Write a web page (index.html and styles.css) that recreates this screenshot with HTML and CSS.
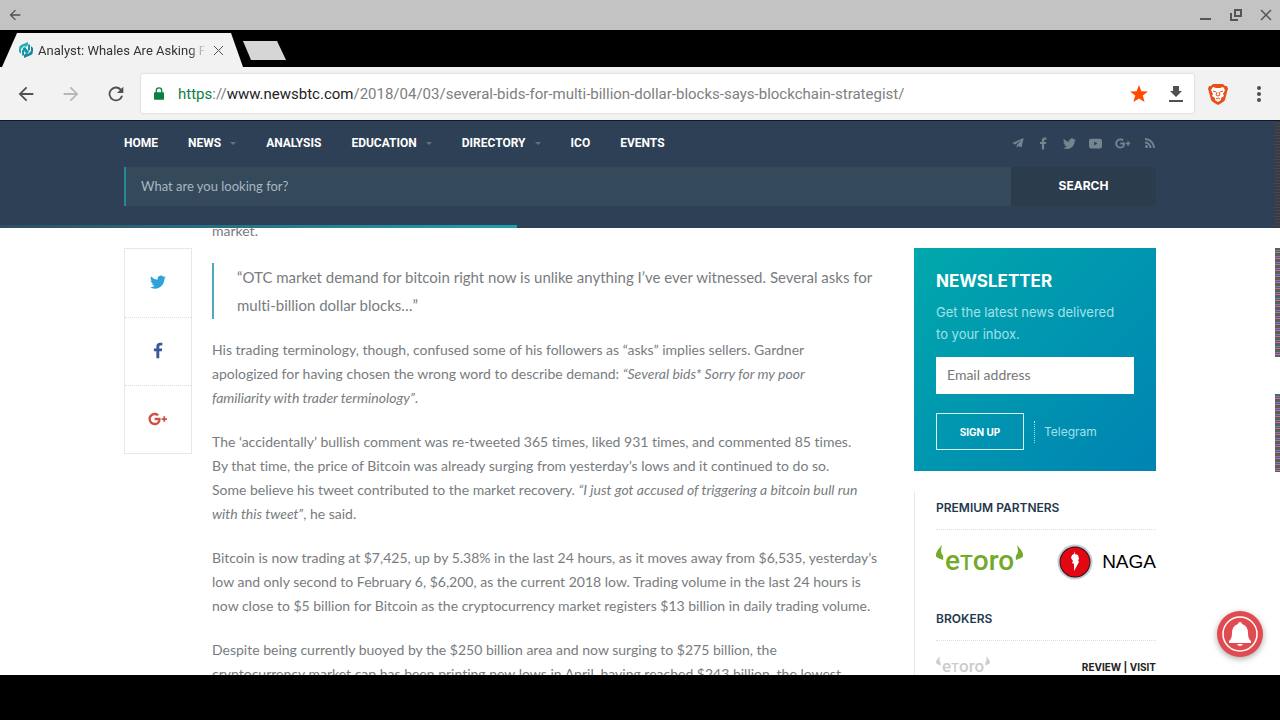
FILE: index.html
```html
<!DOCTYPE html>
<html lang="en">
<head>
    <meta charset="utf-8">
    <title>Analyst: Whales Are Asking For Bitcoin</title>
    <link rel="stylesheet" href="styles.css">
</head>
<body>
    <svg class="defs" aria-hidden="true">
        <symbol id="back" viewBox="0 0 24 24"><path d="M20 11H7.8l5.6-5.6L12 4l-8 8 8 8 1.4-1.4L7.8 13H20z"/></symbol>
        <symbol id="twitter" viewBox="0 0 24 24"><path d="M23.6 4.9a9.6 9.6 0 0 1-2.7.8 4.800 4.800 0 0 0 2.100-2.700 9.600 9.600 0 0 1-3.100 1.200 4.800 4.800 0 0 0-8.300 4.400A13.700 13.700 0 0 1 1.700 3.600a4.800 4.800 0 0 0 1.500 6.500 4.800 4.800 0 0 1-2.200-.6c0 2.300 1.600 4.400 3.900 4.800a4.800 4.800 0 0 1-2.200.1 4.800 4.800 0 0 0 4.500 3.400A9.700 9.700 0 0 1 0 19.800a13.700 13.700 0 0 0 7.500 2.200c9.100 0 14.300-7.700 14-14.600a10 10 0 0 0 2.100-2.500z"/></symbol>
        <symbol id="facebook" viewBox="0 0 24 24"><path d="M9 23V13H5.500V9H9V6.200C9 2.800 11 1 14.200 1c1.500 0 2.800.1 3.200.2V5h-2.200c-1.700 0-2.100.8-2.100 2v2h4.200l-.6 4h-3.600v10z"/></symbol>
        <symbol id="gplus" viewBox="0 0 28 24"><path d="M9 10.300v3.400h5.400c-.3 1.500-1.700 4.100-5.400 4.100-3.200 0-5.800-2.600-5.800-5.800S5.800 6.200 9 6.200c1.800 0 3.100.8 3.800 1.500l2.600-2.500C13.800 3.700 11.600 2.700 9 2.700a9.300 9.300 0 0 0 0 18.600c5.400 0 8.900-3.800 8.900-9.100 0-.7-.1-1.200-.2-1.900zM22 8v2.700h-2.700v2.700H22V16h2.700v-2.600h2.700v-2.700h-2.700V8z"/></symbol>
        <symbol id="telegram" viewBox="0 0 24 24"><path d="M23.500 2 .5 12l6 2.800L19 6 9.500 16v6l3.300-4 6.200 3z"/></symbol>
        <symbol id="youtube" viewBox="0 0 24 24"><path fill-rule="evenodd" d="M4 3h16a4 4 0 0 1 4 4v10a4 4 0 0 1-4 4H4a4 4 0 0 1-4-4V7a4 4 0 0 1 4-4zm5.500 5.500v7l6-3.500z"/></symbol>
        <symbol id="rss" viewBox="0 0 24 24"><circle cx="5" cy="19" r="3"/><path d="M2 9v4a9 9 0 0 1 9 9h4A13 13 0 0 0 2 9z"/><path d="M2 2v4a16 16 0 0 1 16 16h4A20 20 0 0 0 2 2z"/></symbol>
        <symbol id="hornLeft" viewBox="0 0 10 18"><path d="M7 0C2 5-1 9 0 13c2 2 5 3 8 4V12C5 9 5 5 7 0z"/></symbol>
        <symbol id="hornRight" viewBox="0 0 10 18"><path d="M3 0c5 5 8 9 7 13-2 2-5 3-8 4V12c3-3 3-7 1-12z"/></symbol>
    </svg>

    <div class="titlebar">
        <button aria-label="Back"><svg width="16" height="16"><use href="#back"/></svg></button>
        <div class="window-buttons">
            <button aria-label="Minimize"><svg width="12" height="12" viewBox="0 0 12 12"><path d="M0 10h11" stroke-width="2"/></svg></button>
            <button aria-label="Restore"><svg width="12" height="12" viewBox="0 0 12 12"><path d="M5 1h6v6H5zM1 4v7h7" stroke-width="2"/></svg></button>
            <button aria-label="Close"><svg width="12" height="12" viewBox="0 0 12 12"><path d="M1 1l10 10M11 1 1 11" stroke-width="1.500"/></svg></button>
        </div>
    </div>

    <div class="tabs">
        <div class="tab">
            <svg class="favicon" width="14" height="16" viewBox="0 0 14 16"><path fill="#22b0bd" d="M9 0 2 3Q0 4 0 7v3l2 2V7l3-3 2 1 2-2z"/><path fill="#14899b" d="m5 16 7-3q2-1 2-4V6l-2-2v5l-3 3-2-1-2 2z"/><path fill="#1397a9" d="m4 6 2-1 4 5-1 1-1 1-4-4zM3 8h2v5l-1 1-1-1zM9 3l1-1 1 1v5l-2 1z"/></svg>
            <span class="tab-title">Analyst: Whales Are Asking F</span>
            <button aria-label="Close tab"><svg width="11" height="11" viewBox="0 0 11 11"><path d="M1 1l9 9M10 1l-9 9"/></svg></button>
        </div>
        <button class="new-tab" aria-label="New tab"></button>
    </div>

    <div class="toolbar">
        <button aria-label="Back"><svg width="22" height="22"><use href="#back"/></svg></button>
        <button class="forward" aria-label="Forward"><svg width="22" height="22"><use href="#back"/></svg></button>
        <button aria-label="Reload"><svg width="22" height="22" viewBox="0 0 24 24"><path d="M17.700 6.300A8 8 0 1 0 19.700 14h-2.100A6 6 0 1 1 16.200 7.800L13 11h7V4z"/></svg></button>
        <div class="address">
            <svg class="lock" width="10" height="13" viewBox="0 0 12 15"><path d="M2 6V4a4 4 0 0 1 8 0v2h1q1 0 1 1v7q0 1-1 1H1q-1 0-1-1V7q0-1 1-1zm1.500 0h5V4a2.500 2.500 0 0 0-5 0z"/></svg>
            <div class="url"><span class="scheme">https</span>://<span class="host">www.newsbtc.com</span>/2018/04/03/several-bids-for-multi-billion-dollar-blocks-says-blockchain-strategist/</div>
            <button class="star" aria-label="Bookmark"><svg width="20" height="20" viewBox="0 0 20 20"><path d="m10 1 2.400 6.200 6.600.3-5.200 4.100 1.800 6.500L10 14.400l-5.600 3.700 1.800-6.500L1 7.500l6.600-.3z"/></svg></button>
            <button aria-label="Downloads"><svg width="14" height="16" viewBox="0 0 14 16"><path d="M4 0h6v5h3l-6 6-6-6h3zM0 14h14v2H0z"/></svg></button>
        </div>
        <button aria-label="Brave"><svg width="20" height="22" viewBox="0 0 20 22"><path fill="#e8501c" d="M5 1h10l2 2h2l1 3-1 3-2 8q-1 2-7 5-6-3-7-5L1 9 0 6l1-3h2z"/><path fill="#fff" d="M5 4l3 1h4l3-1 2 3-2 4 1 2-3 2v2l-3 2-3-2v-2l-3-2 1-2-2-4z"/><path fill="none" stroke="#e8501c" d="m5 8 3 1m7-1-3 1M9 9l-1 3 2 1 2-1-1-3M8 16l2-1 2 1"/></svg></button>
        <button class="menu" aria-label="Menu"><svg width="4" height="16" viewBox="0 0 4 16"><circle cx="2" cy="2" r="2"/><circle cx="2" cy="8" r="2"/><circle cx="2" cy="14" r="2"/></svg></button>
    </div>

    <header class="site-header">
        <div class="container">
            <nav class="nav">
                <a href="#">HOME</a>
                <a href="#" class="dropdown">NEWS</a>
                <a href="#">ANALYSIS</a>
                <a href="#" class="dropdown">EDUCATION</a>
                <a href="#" class="dropdown">DIRECTORY</a>
                <a href="#">ICO</a>
                <a href="#">EVENTS</a>
                <div class="social">
                    <a href="#" aria-label="Telegram"><svg width="12" height="12"><use href="#telegram"/></svg></a>
                    <a href="#" aria-label="Facebook"><svg width="13" height="13"><use href="#facebook"/></svg></a>
                    <a href="#" aria-label="Twitter"><svg width="13" height="13"><use href="#twitter"/></svg></a>
                    <a href="#" aria-label="YouTube"><svg width="13" height="13"><use href="#youtube"/></svg></a>
                    <a href="#" aria-label="Google Plus"><svg width="16" height="13"><use href="#gplus"/></svg></a>
                    <a href="#" aria-label="RSS"><svg width="12" height="12"><use href="#rss"/></svg></a>
                </div>
            </nav>
            <form class="search">
                <input type="text" placeholder="What are you looking for?" aria-label="Search">
                <button type="button">SEARCH</button>
            </form>
        </div>
        <div class="progress"></div>
        <div class="edge edge-dark"></div>
    </header>

    <main>
        <div class="container columns">
            <div class="share">
                <a href="#" class="tw" aria-label="Share on Twitter"><svg width="16" height="16"><use href="#twitter"/></svg></a>
                <a href="#" class="fb" aria-label="Share on Facebook"><svg width="17" height="17"><use href="#facebook"/></svg></a>
                <a href="#" class="gp" aria-label="Share on Google Plus"><svg width="20" height="16"><use href="#gplus"/></svg></a>
            </div>

            <article>
                <p>market.</p>
                <blockquote>“OTC market demand for bitcoin right now is unlike anything I’ve ever witnessed. Several asks for<br>multi-billion dollar blocks…”</blockquote>
                <p>His trading terminology, though, confused some of his followers as “asks” implies sellers. Gardner<br>apologized for having chosen the wrong word to describe demand: <em>“Several bids* Sorry for my poor<br>familiarity with trader terminology”</em>.</p>
                <p>The ‘accidentally’ bullish comment was re-tweeted 365 times, liked 931 times, and commented 85 times.<br>By that time, the price of Bitcoin was already surging from yesterday’s lows and it continued to do so.<br>Some believe his tweet contributed to the market recovery. <em>“I just got accused of triggering a bitcoin bull run<br>with this tweet”</em>, he said.</p>
                <p>Bitcoin is now trading at $7,425, up by 5.38% in the last 24 hours, as it moves away from $6,535, yesterday’s<br>low and only second to February 6, $6,200, as the current 2018 low. Trading volume in the last 24 hours is<br>now close to $5 billion for Bitcoin as the cryptocurrency market registers $13 billion in daily trading volume.</p>
                <p>Despite being currently buoyed by the $250 billion area and now surging to $275 billion, the<br>cryptocurrency market cap has been printing new lows in April, having reached $243 billion, the lowest</p>
            </article>

            <aside>
                <form class="newsletter">
                    <h2>NEWSLETTER</h2>
                    <p>Get the latest news delivered<br>to your inbox.</p>
                    <input type="email" placeholder="Email address" aria-label="Email address">
                    <div class="actions">
                        <button type="button">SIGN UP</button>
                        <a href="#">Telegram</a>
                    </div>
                </form>
                <div class="partners">
                    <h3>PREMIUM PARTNERS</h3>
                    <div class="logos">
                        <a href="#" class="etoro"><svg width="9" height="16"><use href="#hornLeft"/></svg><span>e<small>T</small>oro</span><svg width="9" height="16"><use href="#hornRight"/></svg></a>
                        <a href="#" class="naga">
                            <svg width="36" height="36" viewBox="0 0 36 36"><circle cx="18" cy="18" r="17.500" fill="#c3ccd6"/><circle cx="18" cy="18" r="15.500" fill="#2b1518"/><circle cx="18" cy="18" r="14.500" fill="#e30613"/><path fill="#fff" d="M17 7l1 3 3 1 1 4-1 1 1 2-5 9 0-7-2-1 1-2-2-3 1-3 2-1z"/></svg>
                            NAGA
                        </a>
                    </div>
                    <h3>BROKERS</h3>
                    <div class="broker">
                        <a href="#" class="etoro small"><svg width="6" height="10"><use href="#hornLeft"/></svg><span>e<small>T</small>oro</span><svg width="6" height="10"><use href="#hornRight"/></svg></a>
                        <div class="links"><a href="#">REVIEW</a> | <a href="#">VISIT</a></div>
                    </div>
                </div>
            </aside>
        </div>
        <div class="edge edge-top"></div>
        <div class="edge edge-bottom"></div>
        <button class="bell" aria-label="Notifications"><svg width="46" height="46" viewBox="0 0 46 46"><circle cx="23" cy="23" r="17" fill="none" stroke="#fff" stroke-width="1.500"/><path fill="#fff" d="M23 11q2 0 2 2 6 2 6 9 0 6 3 8v2H12v-2q3-2 3-8 0-7 6-9 0-2 2-2zM20 33h6q-1 2-3 2t-3-2z"/></svg></button>
    </main>
    <div class="bottom-bar"></div>
</body>
</html>
```
FILE: styles.css
```css
* {
    box-sizing: border-box;
}
body {
    margin: 0;
    height: 100vh;
    display: flex;
    flex-direction: column;
    overflow: hidden;
    background: #000;
    font-family: Lato, sans-serif;
}
a {
    color: inherit;
    text-decoration: none;
}
button {
    display: flex;
    align-items: center;
    justify-content: center;
    padding: 0;
    border: none;
    background: none;
    color: #505050;
    cursor: pointer;
}
svg {
    display: block;
    flex: none;
    fill: currentColor;
}
input {
    border: none;
    outline: none;
}
.defs {
    position: absolute;
    width: 0;
    height: 0;
}

/* browser window */
.titlebar {
    height: 30px;
    flex: none;
    display: flex;
    align-items: center;
    justify-content: space-between;
    padding: 0 8px 0 7px;
    background: #c3c3c3;
}
.window-buttons {
    display: flex;
    gap: 18px;
}
.window-buttons svg,
.tab button svg {
    fill: none;
    stroke: #555;
}
.tabs {
    height: 37px;
    flex: none;
    display: flex;
    align-items: flex-end;
}
.tab {
    width: 243px;
    height: 34px;
    display: flex;
    align-items: center;
    padding: 0 19px;
    background: #f2f2f2;
    clip-path: polygon(17px 0, 231px 0, 100% 100%, 2px 100%);
}
.tab-title {
    flex: 1;
    margin: 0 7px 0 5px;
    white-space: nowrap;
    font: 13px Roboto, sans-serif;
    color: #333;
    mask-image: linear-gradient(to right, #000 90%, transparent);
}
.tab button {
    margin-right: 2px;
}
.new-tab {
    width: 43px;
    height: 19px;
    margin-bottom: 7px;
    background: #d6d6d6;
    clip-path: polygon(0 0, 34px 0, 100% 100%, 8px 100%);
}
.toolbar {
    height: 54px;
    flex: none;
    display: flex;
    align-items: center;
    padding: 0 19px 0 15px;
    background: #f2f2f2;
    border-bottom: 1px solid #0c1a2b;
}
.toolbar > button {
    margin-right: 23px;
}
.toolbar .forward {
    color: #b8b8b8;
    transform: scaleX(-1);
}
.address {
    flex: 1;
    min-width: 0;
    height: 39px;
    display: flex;
    align-items: center;
    gap: 20px;
    margin: 0 14px 0 -9px;
    padding: 0 11px 0 13px;
    background: #fff;
    border-radius: 2px;
    box-shadow: 0 0 2px #bbb;
}
.toolbar .address + button {
    margin-right: 29px;
}
.toolbar .menu {
    margin-right: 0;
}
.lock {
    color: #0b8043;
}
.url {
    flex: 1;
    margin-left: -6px;
    overflow: hidden;
    white-space: nowrap;
    font: 15px/20px Roboto, sans-serif;
    color: #808080;
}
.scheme {
    color: #0b8043;
}
.host {
    color: #222;
}
.star {
    color: #ff4a00;
}

/* site header */
.container {
    width: 100%;
    max-width: 1032px;
    margin: 0 auto;
}
.site-header {
    position: relative;
    z-index: 1;
    flex: none;
    padding-bottom: 22px;
    background: #2d4055;
}
.nav {
    height: 46px;
    display: flex;
    align-items: center;
    gap: 30px;
    padding-bottom: 2px;
    font: bold 12px Roboto, sans-serif;
    color: #fff;
}
.dropdown {
    display: flex;
    align-items: center;
    gap: 9px;
}
.dropdown::after {
    content: "";
    border: 3px solid transparent;
    border-top-color: #617182;
    border-bottom: none;
}
.social {
    display: flex;
    align-items: center;
    gap: 13px;
    margin-left: auto;
    color: #75858f;
}
.search {
    display: flex;
    height: 39px;
}
.search input {
    flex: 1;
    min-width: 0;
    padding: 0 15px 2px;
    background: #34495a;
    border-left: 2px solid #26899a;
    font: 13px Lato, sans-serif;
    font-variant-ligatures: none;
    color: #fff;
}
.search input::placeholder {
    color: #a9b7c1;
    opacity: 1;
}
.search button {
    width: 145px;
    padding-bottom: 2px;
    background: #2b3d4c;
    font: bold 12px Inter, sans-serif;
    color: #fff;
}
.progress {
    position: absolute;
    left: 0;
    bottom: 0;
    width: 517px;
    height: 3px;
    background: linear-gradient(to right, #2d4f63, #22a0ad);
}

/* page */
main {
    position: relative;
    flex: 1;
    min-height: 0;
    overflow: hidden;
    background: #fff;
}
.columns {
    display: grid;
    grid-template-columns: 68px 1fr 242px;
    gap: 20px;
    align-items: start;
}
.share {
    margin-top: 20px;
    border: 1px solid #e8e8e8;
}
.share a {
    display: flex;
    align-items: center;
    justify-content: center;
    height: 68px;
    padding-bottom: 2px;
}
.share a + a {
    border-top: 1px dotted #ddd;
}
.tw {
    color: #2ea3d9;
}
.fb {
    color: #3b5998;
}
.gp {
    color: #cf5044;
}
article {
    margin-top: -9px;
    font-size: 14px;
    line-height: 24px;
    font-variant-ligatures: none;
    white-space: nowrap;
    color: #787c80;
}
article p {
    margin: 0 0 20px;
}
blockquote {
    margin: 0 0 19px;
    padding-left: 23px;
    border-left: 2px solid #4fa9bd;
    font-size: 15px;
    line-height: 28px;
}
aside {
    padding-top: 20px;
}
.newsletter {
    padding: 21px 22px;
    background: linear-gradient(135deg, #00a8ac, #0083b3);
    color: #a5e0e8;
}
.newsletter h2 {
    margin: 0 0 8px;
    font: bold 17px/24px Inter, sans-serif;
    color: #fff;
}
.newsletter p {
    margin: 0 0 12px;
    font: 13px/22px Inter, sans-serif;
}
.newsletter input {
    width: 100%;
    height: 37px;
    padding: 0 11px 2px;
    font: 14px Lato, sans-serif;
}
.newsletter input::placeholder {
    color: #777;
    opacity: 1;
}
.actions {
    display: flex;
    align-items: center;
    gap: 10px;
    margin-top: 19px;
    font: 12px/22px Inter, sans-serif;
}
.actions button {
    width: 88px;
    height: 37px;
    border: 1px solid #d8f2f5;
    font: bold 10px Inter, sans-serif;
    color: #fff;
}
.actions a {
    padding-left: 9px;
    border-left: 1px dotted #a5e0e8;
}
.partners {
    margin-top: 20px;
    padding-left: 21px;
    border-left: 1px solid #e8e8e8;
}
.partners h3 {
    margin: 0;
    padding: 8px 0 12px;
    border-bottom: 1px dotted #ddd;
    font: 600 12px/18px Inter, sans-serif;
    color: #24384c;
}
.logos {
    display: flex;
    align-items: center;
    justify-content: space-between;
    height: 72px;
    padding-bottom: 8px;
}
.etoro {
    display: flex;
    align-items: flex-start;
    color: #73aa28;
    font: 500 28px/32px Roboto, sans-serif;
}
.etoro small {
    font-size: 21px;
}
.etoro.small {
    color: #ccc;
    font-size: 17px;
    line-height: 20px;
}
.etoro.small small {
    font-size: 13px;
}
.naga {
    display: flex;
    align-items: center;
    gap: 9px;
    font: 19px "Liberation Sans", sans-serif;
    color: #000;
}
.broker {
    display: flex;
    align-items: center;
    justify-content: space-between;
    height: 52px;
}
.links {
    font: bold 10px Inter, sans-serif;
    color: #222;
}
.bell {
    position: absolute;
    right: 17px;
    bottom: 18px;
    border-radius: 50%;
    background: #df4b50;
    box-shadow: 0 2px 6px #aaa;
}

/* colour noise along the window edge */
.edge {
    position: absolute;
    right: 0;
    width: 5px;
    background: repeating-linear-gradient(#4a6b52 0 2px, #a56a98 2px 3px, #4e5f9c 3px 4px, #8f8a94 4px 5px, #924054 5px 6px);
}
.edge-dark {
    top: 0;
    bottom: 0;
    background: repeating-linear-gradient(#2f3f4a 0 2px, #5c3f3f 2px 3px);
}
.edge-top {
    top: 20px;
    height: 109px;
}
.edge-bottom {
    top: 166px;
    height: 78px;
}
.bottom-bar {
    flex: none;
    height: 45px;
    background: #000;
}
```
